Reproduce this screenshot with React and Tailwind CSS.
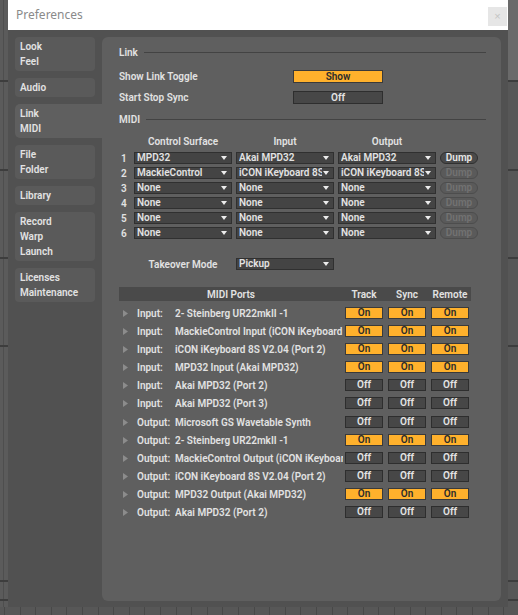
import React from "react";

const nav = [
  ["Look", "Feel"],
  ["Audio"],
  ["Link", "MIDI"],
  ["File", "Folder"],
  ["Library"],
  ["Record", "Warp", "Launch"],
  ["Licenses", "Maintenance"],
];

const surfaces = [
  { n: 1, cs: "MPD32", input: "Akai MPD32", output: "Akai MPD32", dump: true },
  { n: 2, cs: "MackieControl", input: "iCON iKeyboard 8S", output: "iCON iKeyboard 8S", dump: false },
  { n: 3, cs: "None", input: "None", output: "None", dump: false },
  { n: 4, cs: "None", input: "None", output: "None", dump: false },
  { n: 5, cs: "None", input: "None", output: "None", dump: false },
  { n: 6, cs: "None", input: "None", output: "None", dump: false },
];

const ports = [
  { dir: "Input:", name: "2- Steinberg UR22mkII -1", on: true },
  { dir: "Input:", name: "MackieControl Input (iCON iKeyboard 8S V2.04)", on: true },
  { dir: "Input:", name: "iCON iKeyboard 8S V2.04 (Port 2)", on: true },
  { dir: "Input:", name: "MPD32 Input (Akai MPD32)", on: true },
  { dir: "Input:", name: "Akai MPD32 (Port 2)", on: false },
  { dir: "Input:", name: "Akai MPD32 (Port 3)", on: false },
  { dir: "Output:", name: "Microsoft GS Wavetable Synth", on: false },
  { dir: "Output:", name: "2- Steinberg UR22mkII -1", on: true },
  { dir: "Output:", name: "MackieControl Output (iCON iKeyboard 8S V2.04)", on: false },
  { dir: "Output:", name: "iCON iKeyboard 8S V2.04 (Port 2)", on: false },
  { dir: "Output:", name: "MPD32 Output (Akai MPD32)", on: true },
  { dir: "Output:", name: "Akai MPD32 (Port 2)", on: false },
];

// dark strokes of the arrangement view peeking out behind the window
const bgLines = ["top-[80px]", "top-[169px]", "top-[257px]", "top-[345px]", "top-[580px]", "top-[599px]"];

export default function App() {
  return (
    <div className="relative w-[518px] h-[615px] overflow-hidden bg-[#5b5b5b] font-['Roboto',sans-serif] font-semibold text-[10px] text-[#e2e2e2]">
      <div className="absolute left-[508px] top-0 w-[10px] h-[80px] bg-[#6a6a6a]" />
      <div className="absolute left-[508px] top-[80px] w-[10px] h-[535px] bg-[#575757]" />
      <div className="absolute left-[3px] top-0 w-px h-[615px] bg-[#4e4e4e]" />
      {bgLines.map((t) => (
        <div key={t} className={`absolute left-0 w-[518px] h-[2px] bg-[#3d3d3d] ${t}`} />
      ))}
      <div className="absolute left-0 top-[607px] w-[518px] h-[8px] bg-[#575757] bg-[repeating-linear-gradient(90deg,transparent_0_4px,#484848_4px_5px,transparent_5px_15.6px)]" />

      <div className="relative ml-[8px] w-[500px] h-[607px] flex flex-col">
        <div className="h-[30px] bg-white flex items-start justify-between pl-[8px] pr-[1px]">
          <span className="mt-[7px] font-['Noto_Sans',sans-serif] font-normal text-[12px] text-[#8a8a8a] leading-[16px]">
            Preferences
          </span>
          <div className="mt-[7px] w-[19px] h-[19px] bg-[#e6e6e6] flex items-center justify-center font-['Liberation_Sans',sans-serif] font-normal text-[11px] text-[#c4c4c4] leading-none">
            ×
          </div>
        </div>

        <div className="flex-1 bg-[#515151] flex pl-[7px] pr-[7px] pt-[7px] pb-[6px]">
          <div className="w-[87px] flex flex-col gap-[7px]">
            {nav.map((item) => {
              const sel = item[0] === "Link";
              return (
                <div
                  key={item[0]}
                  className={
                    sel
                      ? "w-[87px] rounded-l-[5px] bg-[#5f5f5f] py-[2px] pl-[5px] leading-[15px]"
                      : "w-[80px] rounded-[4px] bg-[#5a5a5a] py-[2px] pl-[5px] leading-[15px]"
                  }
                >
                  {item.map((l) => (
                    <div key={l}>{l}</div>
                  ))}
                </div>
              );
            })}
          </div>

          <div className="flex-1 rounded-[6px] bg-[#5f5f5f] pl-[17px] pr-[15px] pt-[8px]">
            <SectionHeader title="Link" />
            <div className="mt-[11px] flex items-center h-[13px]">
              <span className="w-[174px]">Show Link Toggle</span>
              <Toggle on label="Show" className="w-[90px] h-[13px]" />
            </div>
            <div className="mt-[8px] flex items-center h-[13px]">
              <span className="w-[174px]">Start Stop Sync</span>
              <Toggle label="Off" className="w-[90px] h-[13px]" />
            </div>
            <div className="mt-[8px]">
              <SectionHeader title="MIDI" />
            </div>

            <div className="mt-[9px] flex h-[12px] items-center">
              <span className="w-[15px]" />
              <span className="w-[98px] text-center">Control Surface</span>
              <span className="ml-[4px] w-[98px] text-center">Input</span>
              <span className="ml-[4px] w-[98px] text-center">Output</span>
            </div>
            <div className="mt-[5px] flex flex-col gap-[3px]">
              {surfaces.map((s) => (
                <div key={s.n} className="flex items-center h-[12px]">
                  <span className="w-[15px] pl-[2px]">{s.n}</span>
                  <Dropdown value={s.cs} />
                  <Dropdown value={s.input} className="ml-[4px]" />
                  <Dropdown value={s.output} className="ml-[4px]" />
                  <div
                    className={
                      s.dump
                        ? "ml-[4px] w-[38px] h-[12px] rounded-full border border-[#303030] bg-[#4a4a4a] flex items-center justify-center leading-none text-[#e6e6e6]"
                        : "ml-[4px] w-[38px] h-[12px] rounded-full border border-[#4d4d4d] bg-[#5a5a5a] flex items-center justify-center leading-none text-[#727272]"
                    }
                  >
                    Dump
                  </div>
                </div>
              ))}
            </div>

            <div className="mt-[19px] flex items-center h-[12px]">
              <span className="w-[15px]" />
              <span className="w-[98px] text-center">Takeover Mode</span>
              <Dropdown value="Pickup" className="ml-[4px]" />
            </div>

            <div className="mt-[17px] w-[352px]">
              <div className="flex items-center h-[14px] bg-[#4a4a4a] pr-[2px]">
                <span className="w-[224px] text-center">MIDI Ports</span>
                <span className="ml-[2px] w-[38px] text-center">Track</span>
                <span className="ml-[5px] w-[38px] text-center">Sync</span>
                <span className="ml-[5px] w-[38px] text-center">Remote</span>
              </div>
              <div className="mt-[3px]">
                {ports.map((p, i) => (
                  <div key={i} className={`flex items-center h-[18px] pr-[2px] ${i === 6 ? "mt-[1px]" : ""}`}>
                    <div className="w-[224px] flex items-center overflow-hidden whitespace-nowrap">
                      <span className="w-[18px] pl-[4px] shrink-0">
                        <svg width="5" height="7" viewBox="0 0 5 7">
                          <path d="M0 0L5 3.5L0 7z" fill="#8c8c8c" />
                        </svg>
                      </span>
                      <span className="min-w-[38px] pr-[4px] shrink-0">{p.dir}</span>
                      <span className="flex-1 min-w-0 overflow-hidden">{p.name}</span>
                    </div>
                    <Toggle on={p.on} label={p.on ? "On" : "Off"} className="ml-[2px] w-[38px] h-[12px]" />
                    <Toggle on={p.on} label={p.on ? "On" : "Off"} className="ml-[5px] w-[38px] h-[12px]" />
                    <Toggle on={p.on} label={p.on ? "On" : "Off"} className="ml-[5px] w-[38px] h-[12px]" />
                  </div>
                ))}
              </div>
            </div>
          </div>
        </div>
      </div>
    </div>
  );
}

function SectionHeader({ title }) {
  return (
    <div className="flex items-center h-[14px]">
      <span>{title}</span>
      <div className="ml-[6px] flex-1 h-px bg-[#434343]" />
    </div>
  );
}

function Toggle({ on, label, className = "" }) {
  return (
    <div
      className={`flex items-center justify-center border leading-none ${
        on ? "bg-[#ffb12c] border-[#3a3a3a] text-[#2b2b2b]" : "bg-[#474747] border-[#2e2e2e] text-[#e4e4e4]"
      } ${className}`}
    >
      {label}
    </div>
  );
}

function Dropdown({ value, className = "" }) {
  return (
    <div className={`w-[98px] h-[12px] flex items-center bg-[#444444] border border-[#303030] pl-[2px] pr-[4px] ${className}`}>
      <span className="flex-1 overflow-hidden whitespace-nowrap leading-[10px]">{value}</span>
      <svg width="6" height="4" viewBox="0 0 6 4" className="shrink-0 ml-[1px]">
        <path d="M0 0H6L3 4z" fill="#ececec" />
      </svg>
    </div>
  );
}
